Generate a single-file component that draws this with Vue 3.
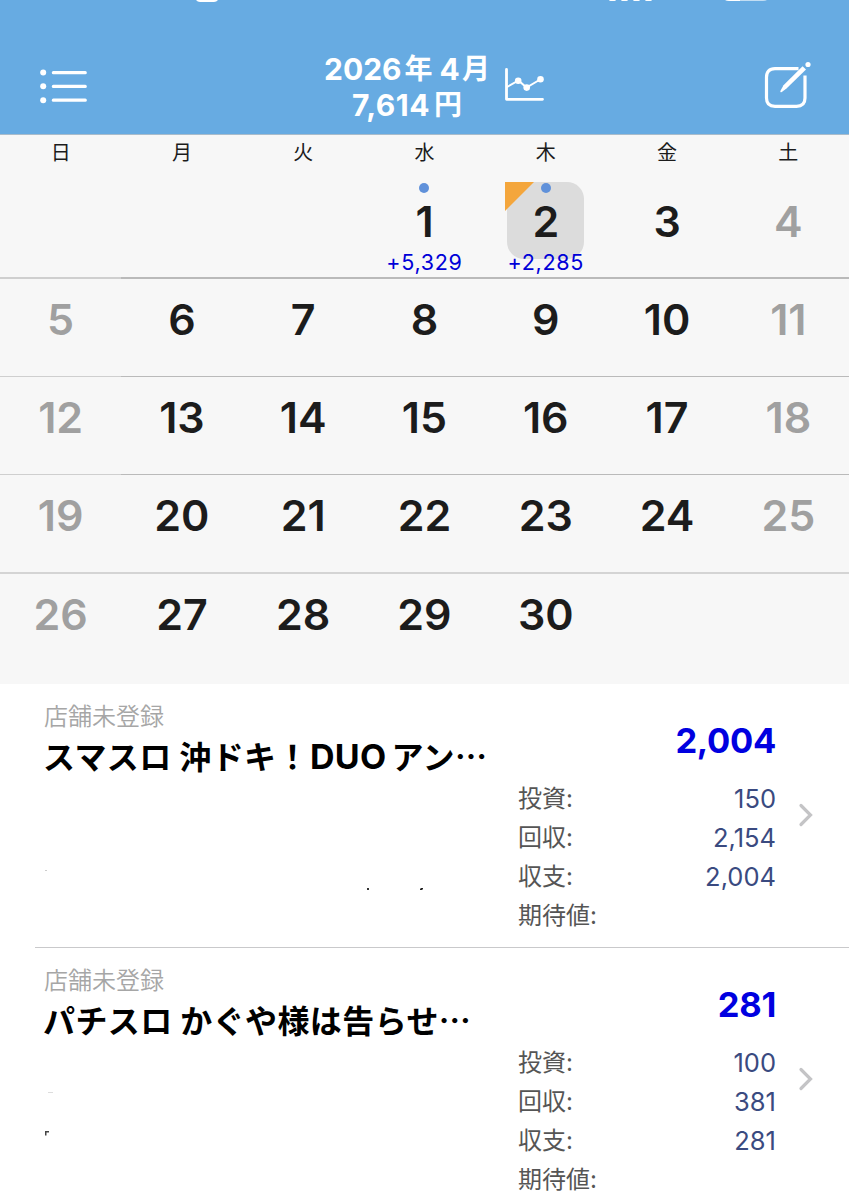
<template>
  <div class="screen">
    <header class="header">
      <!-- bottom edge of the status bar -->
      <svg class="status" width="849" height="4" viewBox="0 0 849 4" fill="#fff">
        <path d="M196 0h22q-1.500 2-4 2h-14q-2.500 0-4-2z" />
        <rect x="609" y="-2" width="7" height="3" rx="1.500" />
        <rect x="621" y="-2" width="7" height="3" rx="1.500" />
        <rect x="633" y="-2" width="7" height="3" rx="1.500" />
        <rect x="645" y="-2" width="7" height="3" rx="1.500" />
        <path d="M725 0h15v1h-11q-2.500 0-4-1z" />
        <path d="M740 0h27q-1.500 1-4 1h-23z" opacity=".6" />
      </svg>
      <button class="icon-btn menu-btn">
        <svg width="48" height="36" viewBox="0 0 48 36" fill="#fff">
          <circle cx="3.200" cy="4.500" r="3" />
          <circle cx="3.200" cy="18.300" r="3" />
          <circle cx="3.200" cy="32.200" r="3" />
          <rect x="11.800" y="2.900" width="35" height="3.300" rx="1.500" />
          <rect x="11.800" y="16.700" width="35" height="3.300" rx="1.500" />
          <rect x="11.800" y="30.500" width="35" height="3.300" rx="1.500" />
        </svg>
      </button>
      <h1 class="title">
        <span class="month"><b>2026</b><i class="nen">年</i><b>4</b><i>月</i></span>
        <span class="total"><b>7,614</b><i>円</i></span>
      </h1>
      <button class="icon-btn chart-btn">
        <svg width="42" height="36" viewBox="0 0 42 36" fill="none" stroke="#fff" stroke-linecap="round">
          <path d="M2.500 3.500V33.300H38.500" stroke-width="2.800" stroke-linejoin="round" />
          <path d="M3 21L14.500 14.500L22.500 21.500L37 13" stroke-width="2" />
          <g fill="#fff" stroke="none">
            <circle cx="14.200" cy="14.700" r="3.300" />
            <circle cx="22.700" cy="21.600" r="3.300" />
            <circle cx="36.500" cy="13.200" r="3.300" />
          </g>
        </svg>
      </button>
      <button class="icon-btn edit-btn">
        <svg width="48" height="48" viewBox="0 0 48 48" fill="none" stroke="#fff">
          <path d="M34.500 7.700H11Q2.500 7.700 2.500 16.200V37Q2.500 45.300 11 45.300H32.500Q41 45.300 41 37V14.500" stroke-width="3.200" />
          <path d="M38.600 5.200L42 8.600L22.500 27.500L17.800 31Q15.700 31.800 16.500 29.700L19.500 24.200Z" fill="#fff" stroke="none" />
          <circle cx="44" cy="3.500" r="2.600" fill="#fff" stroke="none" />
        </svg>
      </button>
    </header>

    <section class="calendar">
      <div class="weekdays">
        <span v-for="w in weekdays" :key="w">{{ w }}</span>
      </div>
      <div v-for="(week, i) in weeks" :key="i" class="week">
        <div
          v-for="(day, j) in week"
          :key="j"
          class="day"
          :class="{ weekend: j === 0 || j === 6, selected: day === selectedDay }"
        >
          <span class="num">{{ day }}</span>
          <template v-if="results[day]">
            <span class="dot"></span>
            <span class="result">{{ results[day] }}</span>
          </template>
          <svg v-if="day === selectedDay" class="corner" width="30" height="30" viewBox="0 0 30 30">
            <path d="M0 0H29L0 29Z" fill="#f4a63c" />
          </svg>
        </div>
      </div>
    </section>

    <main class="entries">
      <article v-for="(entry, i) in entries" :key="i" class="entry">
        <div class="left">
          <div class="shop">店舗未登録</div>
          <h2 class="machine">
            <span v-for="(part, k) in entry.name" :key="k" :class="{ latin: part.latin }">{{ part.text }}</span>
          </h2>
        </div>
        <div class="right">
          <div class="balance">{{ entry.balance }}</div>
          <dl class="details">
            <div v-for="row in entry.rows" :key="row.label">
              <dt>{{ row.label }}:</dt>
              <dd>{{ row.value }}</dd>
            </div>
          </dl>
        </div>
        <svg class="chevron" width="16" height="26" viewBox="0 0 16 26">
          <path d="M3 3.500L12.500 13L3 22.500" fill="none" stroke="#c4c4c6" stroke-width="3.200" stroke-linecap="round" />
        </svg>
        <svg class="specks" width="480" height="264" viewBox="0 0 480 264">
          <path v-for="s in entry.specks" :key="s.d" :d="s.d" :fill="s.color" />
        </svg>
      </article>
    </main>
  </div>
</template>

<script setup>
import { ref } from 'vue'

const weekdays = ['日', '月', '火', '水', '木', '金', '土']
const selectedDay = ref(2)
const results = { 1: '+5,329', 2: '+2,285' }

// April 2026 starts on a Wednesday
const firstWeekday = 3
const daysInMonth = 30
const weeks = []
for (let start = 1 - firstWeekday; start <= daysInMonth; start += 7) {
  const week = []
  for (let d = start; d < start + 7; d++) {
    week.push(d > 0 && d <= daysInMonth ? d : '')
  }
  weeks.push(week)
}

const entries = [
  {
    name: [{ text: 'スマスロ 沖ドキ！' }, { text: 'DUO', latin: true }, { text: 'アン…' }],
    balance: '2,004',
    rows: [
      { label: '投資', value: '150' },
      { label: '回収', value: '2,154' },
      { label: '収支', value: '2,004' },
      { label: '期待値', value: '' },
    ],
    specks: [
      { d: 'M45 186h2v1h-2z', color: '#ccc' },
      { d: 'M367 204h2v2h-2z', color: '#333' },
      { d: 'M421 204h2v1l-1 1h-2v-1z', color: '#222' },
    ],
  },
  {
    name: [{ text: 'パチスロ かぐや様は告らせ…' }],
    balance: '281',
    rows: [
      { label: '投資', value: '100' },
      { label: '回収', value: '381' },
      { label: '収支', value: '281' },
      { label: '期待値', value: '' },
    ],
    specks: [
      { d: 'M48 144h5v1h-5z', color: '#ddd' },
      { d: 'M45 183h4v1.500h-2.500v3h-1.500z', color: '#444' },
    ],
  },
]
</script>

<style>
body {
  background: #fff;
}
</style>

<style scoped>
.screen {
  width: 849px;
  height: 1200px;
  overflow: hidden;
  font-family: Inter, 'Noto Sans CJK JP', sans-serif;
  color: #1c1c1c;
}

/* header */
.header {
  position: relative;
  display: flex;
  align-items: flex-start;
  box-sizing: border-box;
  height: 135px;
  background: #67abe2;
  border-bottom: 1px solid #a9bccb;
}
.status {
  position: absolute;
  top: 0;
  left: 0;
}
.icon-btn {
  padding: 0;
  border: 0;
  background: none;
}
.icon-btn svg {
  display: block;
}
.menu-btn {
  margin: 68px 0 0 40px;
}
.title {
  display: flex;
  flex-direction: column;
  align-items: center;
  width: 168px;
  margin: 51px 0 0 235px;
  color: #fff;
  font-size: 30px;
  line-height: 36px;
}
.title span {
  display: flex;
  white-space: nowrap;
}
.title b {
  font-weight: 700;
}
.title i {
  font-style: normal;
  font-weight: 700;
  font-size: 28px;
}
.title .nen {
  margin: 0 7px 0 3px;
}
.title .nen + b {
  margin-right: 2px;
}
.total b {
  letter-spacing: 0.500px;
}
.total i {
  margin-left: 4px;
}
.chart-btn {
  margin: 66px 0 0 13px;
}
.edit-btn {
  margin: 61px 0 0 218px;
}

/* calendar */
.calendar {
  box-sizing: border-box;
  height: 549px;
  background: #f7f7f7;
}
.weekdays {
  display: grid;
  grid-template-columns: repeat(7, 1fr);
  height: 45px;
  line-height: 36px;
  font-size: 20px;
  text-align: center;
}
.week {
  display: grid;
  grid-template-columns: repeat(7, 1fr);
  height: 98.300px;
}
.day {
  position: relative;
  display: flex;
  justify-content: center;
  box-sizing: border-box;
  border-bottom: 1px solid #bababa;
}
.week:nth-child(2) {
  height: 99px;
  margin-bottom: -0.700px;
}
.week:nth-child(2) .day {
  border-bottom-width: 2px;
}
.week:nth-child(5) {
  height: 99px;
  margin-bottom: -0.700px;
}
.week:nth-child(5) .day {
  border-bottom: 2px solid #d4d4d4;
}
.week:last-child .day {
  border-bottom: 0;
}
.day:first-child {
  border-bottom-color: #cfcfcf;
}
.num {
  display: flex;
  align-items: center;
  justify-content: center;
  width: 77px;
  height: 77px;
  margin-top: 2px;
  border-radius: 17px;
  font-size: 43px;
  font-weight: 600;
}
.weekend .num {
  color: #a0a0a0;
}
.selected .num {
  background: #dcdcdc;
}
.dot {
  position: absolute;
  top: 3px;
  left: 50%;
  z-index: 1;
  width: 10px;
  height: 10px;
  margin-left: -5px;
  border-radius: 50%;
  background: #6091da;
}
.result {
  position: absolute;
  top: 69px;
  left: 0;
  width: 100%;
  color: #0000d8;
  font-size: 21.500px;
  line-height: 26px;
  letter-spacing: 0.700px;
  text-align: center;
}
.corner {
  position: absolute;
  top: 2px;
  left: 20px;
}

/* entries */
.entry {
  position: relative;
  display: flex;
  height: 264.300px;
}
.entry::after {
  content: '';
  position: absolute;
  left: 35px;
  right: 0;
  bottom: 0;
  height: 1px;
  background: #c9c9cb;
}
.left {
  width: 474px;
  padding: 15px 0 0 44px;
}
.shop {
  color: #a6a6a6;
  font-size: 24px;
  font-weight: 350;
  line-height: 36px;
}
.machine {
  margin: -2px 0 0 -1px;
  color: #000;
  font-family: 'Noto Sans CJK JP', sans-serif;
  font-size: 32px;
  font-weight: 700;
  line-height: 44px;
  letter-spacing: 0.400px;
  white-space: pre;
}
.latin {
  margin: 0 5px 0 1px;
  font-family: Inter, sans-serif;
  font-size: 34px;
  letter-spacing: 0.300px;
}
.right {
  width: 258px;
  padding-top: 36px;
}
.balance {
  color: #0000e0;
  font-size: 34.500px;
  font-weight: 700;
  line-height: 41px;
  letter-spacing: -0.300px;
  text-align: right;
}
.details {
  margin: 18px 0 0;
  font-size: 24px;
}
.details div {
  display: flex;
  justify-content: space-between;
  height: 39px;
  line-height: 40px;
}
.details dt {
  color: #555;
}
.details dd {
  margin: 0;
  color: #3a4a80;
  font-size: 25.500px;
  line-height: 39px;
}
.chevron {
  margin: 118px 0 0 22px;
}
.specks {
  position: absolute;
  top: 0;
  left: 0;
}
</style>
